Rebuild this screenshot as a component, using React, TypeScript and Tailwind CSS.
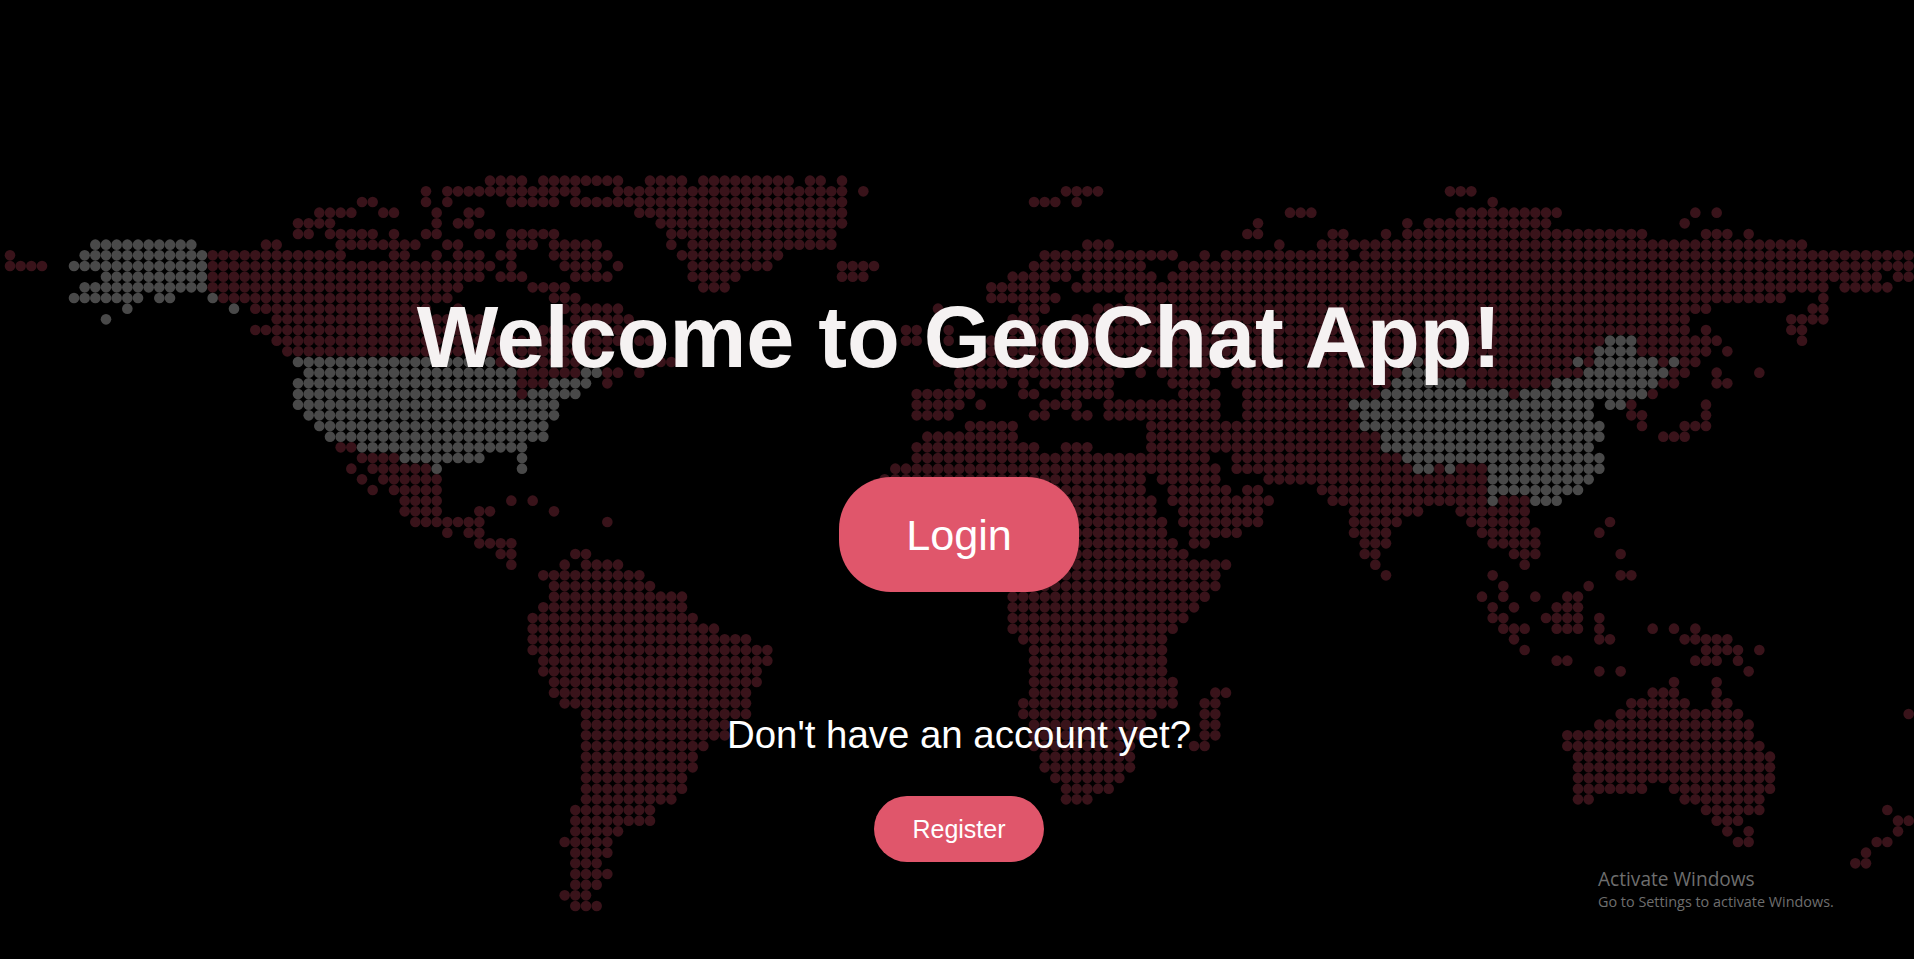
const ROWS: string[] = [
  "45-48,50-57,60-63,65-73,75-76,78",
  "39,41-53,57-78,80,99-102,135-137",
  "33-34,39,41,47-51,53-78,96-98,100,139",
  "29-32,35-36,40,43-44,59-78,120-122,136-145,158,160",
  "27-30,40,42-43,61-78,117,131,133-144,157",
  "27-28,30-34,36,39-40,44-45,47-51,62-77,116-117,124-125,129,131-153,159-161,163",
  "g8-17,24-25,31-38,41-42,47-49,51-55,62,64-77,101-103,119,123-168",
  "0,g7-18,19-31,36-37,40,42-44,46-47,51-56,63-72,97-109,112,114-125,127-178",
  "0-3,g6-18,19-45,47,52-55,57,64-71,78-81,96-106,110-178",
  "g9-18,19-44,46-48,53-56,64-68,78-80,94-99,101-107,109-175,177-178",
  "g7-18,19-42,49-52,65-67,92-97,100-170,172-176",
  "g6-12,g14-15,g19,20-41,51-53,92-98,105-166,170",
  "g11,g21,23-39,42,52-57,87,95-97,102-159,169-170",
  "g9,25-44,53-58,94-96,100-157,167-170",
  "23-45,50-58,84-85,88,94-157,159,167-168",
  "25-57,59-60,84-85,88,92-149,g150-152,153-160,168",
  "26-56,91-148,g149-152,153-159,161",
  "g27-45,46-53,61-62,87,90-131,g132,133-146,g147,148,g149-154,155,g156,157-158",
  "g28-47,48-53,g54-55,56-57,59,89-104,106,108-113,115-130,g131-133,134-147,g148-155,156-157,160,164",
  "g27-47,48-50,g51-54,56,89-93,95,97-103,109-112,115-129,g130-136,137-144,g145-154,155-156,160-161",
  "g27-47,48,g49-53,85-90,95-96,99-103,110-113,116-128,g129-140,141,g142-153,154",
  "g27-51,85-89,91,97-100,103-113,116-125,g126-148,g150-151,152,159",
  "g28-51,85-88,96-97,100-101,103-113,116-126,g127-148,152-153,159",
  "g29-50,90-94,107-126,g127-149,153,157-159",
  "g30-50,86-94,107-128,g129-149,155-157",
  "31-32,g33-48,85-96,99-101,107-128,g129-148",
  "33-36,g37-44,g48,85-112,115-130,g131-149",
  "32,34-39,g40,g48,83-113,115-131,g132-133,134,g135,136-138,g139-149",
  "33,35-40,82-106,108-113,118-138,g139-148",
  "34,36-40,84-106,109-114,116-117,123-138,g139-147",
  "37-40,47,49,84-107,109-118,124-138,g139,140-142,g143-145",
  "37-40,44-45,51,84-107,110-117,126-132,136-142",
  "38-44,56,84-108,110-117,126-130,137-142,150",
  "41,43-44,84-108,111-115,126-129,138-143,149",
  "44-47,84-109,111-112,127-129,139-143",
  "46-47,53-54,84-110,127-128,141-143,151",
  "47,52,54-57,84-114,128,142",
  "50-59,88-113,129,139,151-152",
  "51-60,90-113,140,148",
  "51-63,94-112,138,140,143,146-147",
  "50-63,94-111,139,141,145-147",
  "49-64,94-110,139-140,144-147,149",
  "49-66,94-109,140-142,145-147,149,154,156,158",
  "49-69,95-108,141,149-150,157-161",
  "49-71,96-108,142,159-162,164",
  "50-71,96-108,145-146,158-160,162",
  "50-70,96-108,149,151,163",
  "51-70,96-109,156,160",
  "51-69,96-109,113-114,154-156,160",
  "52-69,95-109,112-113,152-157,160-161",
  "54-69,95-107,112-113,151-162,178",
  "54-67,96-106,112-113,149-163",
  "54-67,96-106,112-113,146-163",
  "54-65,96-105,111-112,146-164",
  "54-64,97-105,147-165",
  "54-64,97-105,147-165",
  "54-63,98-104,147-165",
  "54-63,99-103,147-153,156-165",
  "54-62,99-101,147-148,157-164",
  "53-60,159-164,176",
  "53-60,160-162,177-178",
  "53-57,161,163,177",
  "52-56,162-163,175-176",
  "53-56,174",
  "53-55,173-174",
  "53-56",
  "53-55",
  "52-54",
  "53-55",
];

const PITCH = 32 / 3;

type Dot = { x: number; y: number; gray: boolean };

function buildDots(): Dot[] {
  const dots: Dot[] = [];
  ROWS.forEach((row, r) => {
    row.split(",").forEach((token) => {
      const gray = token.startsWith("g");
      const [a, b] = token.replace("g", "").split("-").map(Number);
      for (let k = a; k <= (b ?? a); k++) {
        dots.push({ x: 10 + k * PITCH, y: 180.67 + r * PITCH, gray });
      }
    });
  });
  return dots;
}

const DOTS = buildDots();

function WorldMap() {
  return (
    <svg className="absolute left-0 top-0" width="1914" height="959" viewBox="0 0 1914 959" aria-hidden="true">
      {DOTS.map((d, i) => (
        <circle key={i} cx={d.x} cy={d.y} r={5.3} fill={d.gray ? "#494949" : "#39131a"} />
      ))}
    </svg>
  );
}

export default function App() {
  return (
    <div className="relative h-[959px] w-full overflow-hidden bg-black font-['Liberation_Sans',Arial,sans-serif] text-white">
      <WorldMap />
      <main className="relative flex flex-col items-center pl-[4px] pt-[294px]">
        <h1 className="text-[86.4px] font-bold leading-none text-[#f5f2f2]">Welcome to GeoChat App!</h1>
        <button className="mt-[97px] flex h-[115px] w-[240px] items-center justify-center rounded-[52px] bg-[#e0566b] text-[43.2px] text-white">
          Login
        </button>
        <p className="mt-[124px] text-[38.4px] leading-none text-white">Don't have an account yet?</p>
        <button className="mt-[41px] flex h-[66px] w-[170px] items-center justify-center rounded-[33px] bg-[#e0566b] pt-[2px] text-[25px] text-white">
          Register
        </button>
      </main>
      <div className="absolute left-[1598px] top-[867px] font-['Open_Sans',sans-serif] text-[#6e6e6e]">
        <div className="text-[19.1px] leading-[25px]">Activate Windows</div>
        <div className="text-[14.4px] leading-[20px]">Go to Settings to activate Windows.</div>
      </div>
    </div>
  );
}
